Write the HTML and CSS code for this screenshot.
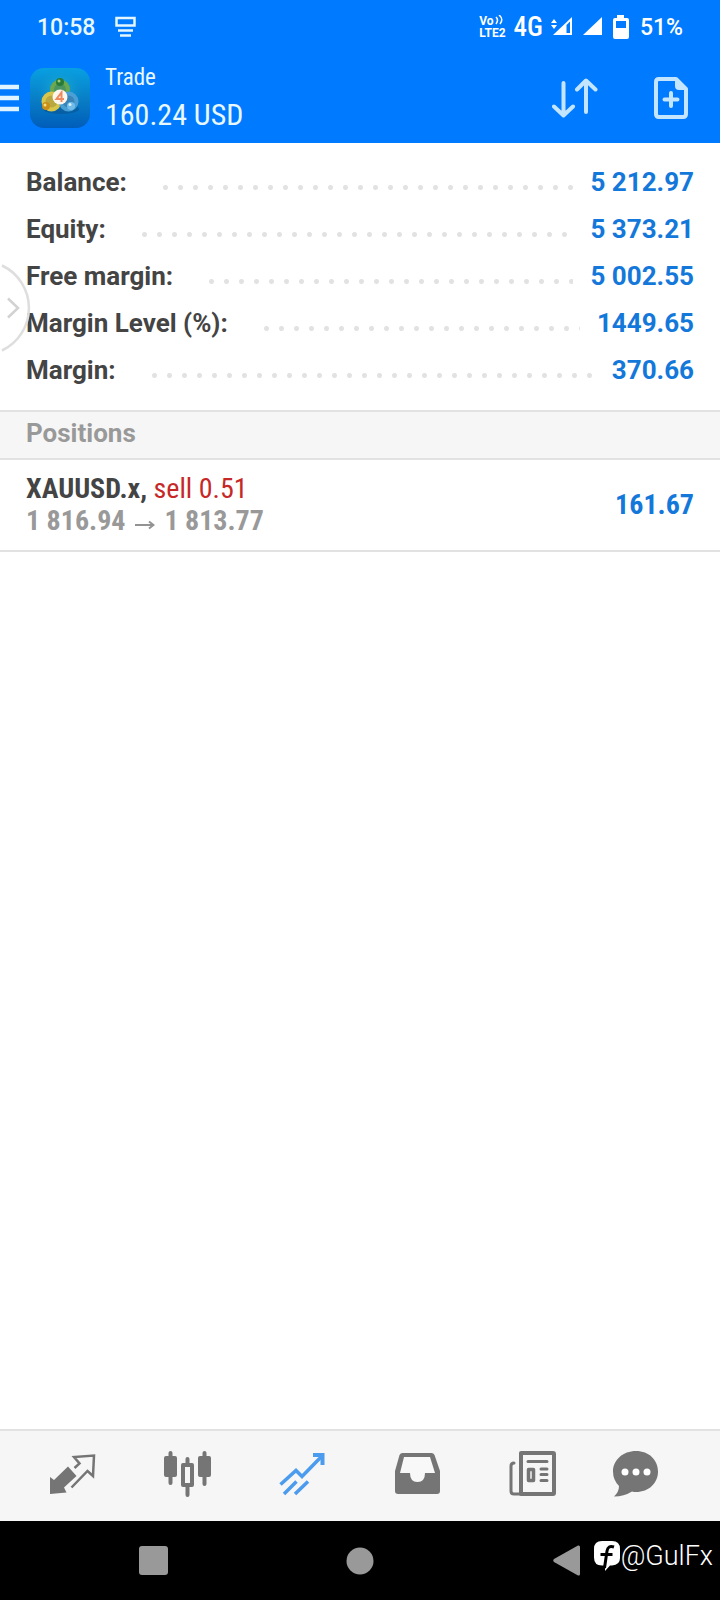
FILE: index.html
```html
<!DOCTYPE html>
<html lang="en">
<head>
<meta charset="utf-8">
<meta name="viewport" content="width=device-width, initial-scale=1">
<title>Trade</title>
<link rel="stylesheet" href="styles.css">
</head>
<body>
<div class="app">
  <header class="top">
    <div class="status">
      <span class="clock">10:58</span>
      <svg class="notice" width="22" height="22" viewBox="0 0 22 22" fill="none" stroke="#e4f6ff"><path d="M1.500 2h18v7.500h-18z" stroke-width="2.500"/><path d="M3 14.500h15M5 19.500h11" stroke-width="2.500"/></svg>
      <span class="status-right">
        <span class="volte"><span class="vo">Vo<svg width="9" height="10" viewBox="0 0 9 10" fill="none" stroke="#fff" stroke-width="1.500"><path d="M1 2q3 3 0 7M4 0q5 4 1 9"/></svg></span><span>LTE2</span></span>
        <span class="net">4G</span>
        <svg class="signal" width="51" height="20" viewBox="0 0 51 20" fill="#fff"><path d="M0 6l3-4 3 4zM0 8l3 4 3-4z"/><path d="M2 18L21 0v18z"/><path d="M15.500 8l3.500-3.500V16h-3.500z" fill="#007aff"/><path d="M32 18L51 0v18z"/></svg>
        <svg class="battery" width="16" height="24" viewBox="0 0 16 24"><path d="M4 0h7v3h3q2 0 2 2v17q0 2-2 2H2q-2 0-2-2V5q0-2 2-2h2z" fill="#fff"/><path d="M3 6h10v7H3z" fill="#007aff"/></svg>
        <span class="clock">51%</span>
      </span>
    </div>
    <div class="bar">
      <button class="menu" aria-label="Menu"><svg width="19" height="28" viewBox="0 0 19 28" stroke="#dff4ff" stroke-width="4.500"><path d="M0 3h19M0 14h19M0 25h19"/></svg></button>
      <svg class="logo" width="60" height="60" viewBox="0 0 60 60">
        <defs>
          <linearGradient id="tile" x1="0" y1="0" x2="0" y2="1"><stop offset="0" stop-color="#08a0e2"/><stop offset=".55" stop-color="#087cc4"/><stop offset="1" stop-color="#005dba"/></linearGradient>
          <radialGradient id="glow"><stop offset="0" stop-color="#24c0cc" stop-opacity=".8"/><stop offset="1" stop-color="#1090d0" stop-opacity="0"/></radialGradient>
        </defs>
        <rect width="60" height="60" rx="14" fill="url(#tile)"/>
        <circle cx="30" cy="22" r="24" fill="url(#glow)"/>
        <ellipse cx="31" cy="41" rx="18" ry="5" fill="#074e88" opacity=".5"/>
        <g stroke-width="4"><circle cx="30" cy="21.500" r="8" stroke="#6da84c" fill="#4b9660"/><circle cx="21.500" cy="33.500" r="8" stroke="#d8c54c" fill="#b9a840"/><circle cx="38.500" cy="33.500" r="8" stroke="#4a9fd4" fill="#3985b8"/></g>
        <circle cx="30" cy="14" r="4" fill="#287a38"/><circle cx="29" cy="13" r="1.500" fill="#9aca7a"/>
        <circle cx="16" cy="38" r="4" fill="#c98e18"/><circle cx="15" cy="37" r="1.500" fill="#f4e080"/>
        <circle cx="41" cy="38" r="4" fill="#70bbe8"/><circle cx="40" cy="36.500" r="1.500" fill="#d8f2ff"/>
        <circle cx="30" cy="29" r="7.500" fill="#fdf6ec"/>
        <path d="M31.500 34v-9.500L26.500 31h7.500" fill="none" stroke="#ee8a60" stroke-width="2"/>
      </svg>
      <div class="heading"><h1 class="title">Trade</h1><span class="profit">160.24 USD</span></div>
      <button class="action" aria-label="Sort"><svg width="46" height="40" viewBox="0 0 46 40" fill="none" stroke="#c4e5ff" stroke-width="4" stroke-linecap="round" stroke-linejoin="round"><path d="M11.500 5v32M2 28.500l9.500 9 9.500-9M34 34V3M25 11.500L34 2.500l9.500 9"/></svg></button>
      <button class="action" aria-label="New order"><svg width="34" height="42" viewBox="0 0 34 42" fill="none" stroke="#c4e5ff" stroke-width="4" stroke-linejoin="round"><path d="M22 2H5Q2 2 2 5v32q0 3 3 3h24q3 0 3-3V12z"/><path d="M22 2v7q0 3 3 3h7z" fill="#c4e5ff" stroke-width="2"/><path d="M17 16v13M10.500 22.500h13" stroke-linecap="round"/></svg></button>
    </div>
  </header>

  <main class="content">
    <dl class="summary">
      <div class="row"><dt>Balance:</dt><dd>5 212.97</dd></div>
      <div class="row"><dt>Equity:</dt><dd>5 373.21</dd></div>
      <div class="row"><dt>Free margin:</dt><dd>5 002.55</dd></div>
      <div class="row"><dt>Margin Level (%):</dt><dd>1449.65</dd></div>
      <div class="row"><dt>Margin:</dt><dd>370.66</dd></div>
    </dl>
    <h2 class="section">Positions</h2>
    <div class="position">
      <div>
        <div class="symbol">XAUUSD.x, <span class="sell">sell 0.51</span></div>
        <div class="prices">1 816.94 <svg width="20" height="12" viewBox="0 0 20 12" fill="none" stroke="#939393" stroke-width="2"><path d="M0 7h18M14 3.500L18.500 7 14 10.500"/></svg> 1 813.77</div>
      </div>
      <span class="gain">161.67</span>
    </div>
    <button class="drawer" aria-label="Open panel"><svg width="32" height="92" viewBox="0 0 32 92" fill="none" stroke="#dedede" stroke-width="2.500"><path d="M2 3.500A47 47 0 0 1 2 88.500"/><path d="M8 36.500L18 46 8 55.500" stroke="#d2d2d2"/></svg></button>
  </main>

  <nav class="tabs" aria-label="Sections">
    <button aria-label="Quotes"><svg width="48" height="48" viewBox="0 0 48 48"><path d="M2 26l4 3L20 15.500 28.500 25 16 36.500l2.500 5L2 43z" fill="#757575"/><path d="M26.500 17l5-4.500-5.500-6.500L46 4.500 45 25l-5.500-5L23.500 36.500" fill="none" stroke="#757575" stroke-width="2.500"/></svg></button>
    <button aria-label="Charts"><svg width="48" height="48" viewBox="0 0 48 48" fill="none" stroke="#757575" stroke-linecap="round" stroke-width="4"><path d="M7.500 2v30M24.500 8v36M41.500 2v31"/><path d="M3 7h9v17H3zM37 7h9v17h-9z" fill="#757575" stroke-linejoin="round"/><path d="M20 14h9v20h-9z" fill="#f6f6f6" stroke-linejoin="round"/></svg></button>
    <button aria-label="Trade"><svg width="48" height="48" viewBox="0 0 48 48" fill="none" stroke="#4b9bee" stroke-width="3.500"><path d="M2.500 33.500L18 19.500l6 6L44 5"/><path d="M35 4h9.500v10" stroke-width="4"/><path d="M6 43l12.500-12.500M17 43L30 30.500"/></svg></button>
    <button aria-label="History"><svg width="48" height="48" viewBox="0 0 48 48"><path d="M9.500 2h29q2 0 3 2L47 20v20q0 3-3 3H5q-3 0-3-3V20L6.500 4q1-2 3-2z" fill="#757575"/><path d="M11 6h26l5 16H32q0 9-7.500 9T17 22H7z" fill="#f8f8f8"/></svg></button>
    <button aria-label="News"><svg width="48" height="48" viewBox="0 0 48 48" fill="none" stroke="#757575" stroke-width="4" stroke-linecap="round" stroke-linejoin="round"><path d="M13 2h32q1 0 1 1v39q0 1-1 1H13z"/><path d="M13 43H6q-3 0-3-3V15q0-3 3-3" stroke-width="3"/><path d="M20 10.500h19M33 18h6M33 23.500h6M33 29.500h6" stroke-width="3"/><path d="M20.500 18.500h5v11h-5z" stroke-width="3.500"/></svg></button>
    <button aria-label="Chat"><svg width="48" height="48" viewBox="0 0 48 48"><path d="M24 0C37 0 46 9 46 20.500S37 41 24 41q-2 0-4-.5-8 5-18 5Q7 41 7 35 1 29 1 20.500C1 9 11 0 24 0z" fill="#757575"/><g fill="#fff"><circle cx="13" cy="21" r="3.500"/><circle cx="24" cy="21" r="3.500"/><circle cx="35" cy="21" r="3.500"/></g></svg></button>
  </nav>

  <footer class="system">
    <button aria-label="Recent apps"><svg width="30" height="30" viewBox="0 0 30 30"><rect x="1" width="29" height="29" rx="3" fill="#999"/></svg></button>
    <button aria-label="Home"><svg width="28" height="28" viewBox="0 0 28 28"><circle cx="14" cy="14" r="13.500" fill="#999"/></svg></button>
    <button aria-label="Back"><svg width="28" height="32" viewBox="0 0 28 32"><path d="M1 14L25 .5q2-.5 2 1.500v27q0 2-2 1.500L1 17q-1.500-1.500 0-3z" fill="#999"/></svg></button>
    <div class="credit"><svg width="26" height="30" viewBox="0 0 26 30"><path d="M8 0h10q8 0 8 8v9q0 7-8 7.500h-2L11 30V24.500H8q-8 0-8-8V8q0-8 8-8z" fill="#fff"/><path d="M20 6q-6-2-7 4l-2.500 17M6.500 13.500h12" fill="none" stroke="#000" stroke-width="3"/></svg><span>@GulFx</span></div>
  </footer>
</div>
</body>
</html>
```

FILE: styles.css
```css
* { box-sizing: border-box; margin: 0; padding: 0; }
body { background: #fff; color: #444; font-family: Roboto, sans-serif; }
button { border: 0; background: none; cursor: pointer; display: flex; align-items: center; justify-content: center; }
svg { display: block; flex: none; }
.app { min-height: 100vh; display: flex; flex-direction: column; }

.top { background: #007aff; color: #e8f8ff; padding-bottom: 6px; }
.status { height: 54px; padding: 0 37px; display: flex; align-items: center; font-size: 23px; font-weight: 500; }
.notice { margin-left: 20px; }
.status-right { margin-left: auto; display: flex; align-items: center; gap: 8px; color: #fff; }
.volte { display: flex; flex-direction: column; font-size: 12px; line-height: 12px; font-weight: 700; }
.vo { display: flex; gap: 1px; height: 12px; }
.net { font-family: "Roboto Condensed", "Liberation Sans Narrow", Roboto, sans-serif; font-size: 27px; line-height: 32px; }
.battery { margin: 0 3px; }
.bar { display: flex; align-items: center; height: 83px; padding: 5px 32px 0 0; }
.logo { margin-left: 11px; }
.heading { margin-left: 15px; flex: 1; display: flex; flex-direction: column; font-family: "Roboto Condensed", "Liberation Sans Narrow", Roboto, sans-serif; }
.title { font-size: 23px; line-height: 34px; font-weight: 400; }
.profit { font-size: 30px; line-height: 40px; }
.action { margin-left: 56px; }

.content { position: relative; flex: 1; }
.summary { padding: 15px 26px 17px; font-size: 26px; font-weight: 700; }
.row { height: 47px; display: flex; align-items: center; }
.row dt { white-space: nowrap; }
.row::after { content: ""; order: 1; flex: 1; height: 5px; margin: 11px 17px 0 31px; background: radial-gradient(circle, #e2e2e2 2px, transparent 3px) 0 0 / 15px 5px repeat-x; }
.row dd { order: 2; color: #1478da; white-space: nowrap; }
.section { height: 50px; padding: 0 26px; border-top: 2px solid #e2e2e2; border-bottom: 2px solid #e2e2e2; background: #f6f6f6; color: #999; font-size: 26px; line-height: 42px; font-weight: 700; }
.position { padding: 13px 26px; border-bottom: 2px solid #e2e2e2; display: flex; align-items: center; justify-content: space-between; font-family: "Roboto Condensed", "Liberation Sans Narrow", Roboto, sans-serif; font-size: 28px; line-height: 32px; font-weight: 700; }
.sell { color: #c62828; font-weight: 400; }
.prices { color: #999; }
.prices svg { display: inline-block; margin: 0 3px; }
.gain { color: #1478da; }
.drawer { position: absolute; left: 0; top: 119px; }

.tabs { height: 92px; padding: 0 38px 2px 14px; border-top: 2px solid #e2e2e2; background: #f6f6f6; display: grid; grid-template-columns: repeat(5, 115fr) 93fr; align-items: center; }
.system { position: relative; height: 79px; padding: 0 50px; background: #000; display: grid; grid-template-columns: repeat(3, 1fr); align-items: center; }
.credit { position: absolute; right: 7px; top: 18px; display: flex; align-items: center; gap: 1px; color: #fff; font-size: 27px; line-height: 34px; font-weight: 300; }
```
